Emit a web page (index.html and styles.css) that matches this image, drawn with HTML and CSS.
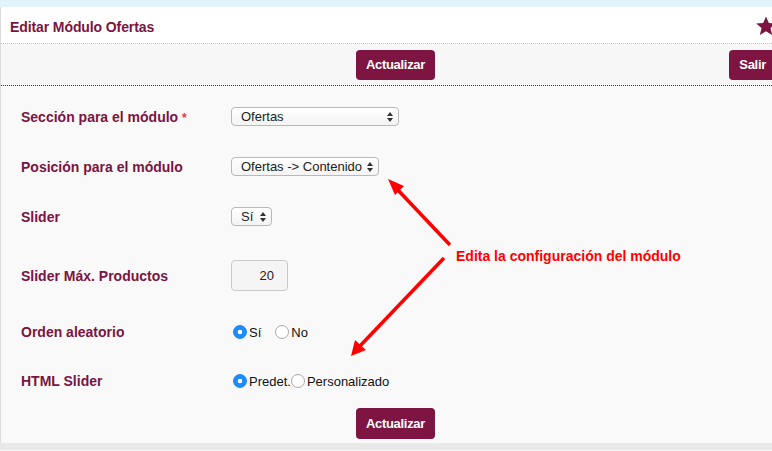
FILE: index.html
```html
<!DOCTYPE html>
<html lang="es">
<head>
  <meta charset="UTF-8" />
  <meta name="viewport" content="width=device-width, initial-scale=1.0" />
  <title>Editar Módulo Ofertas</title>
  <link rel="stylesheet" href="styles.css">
</head>
<body>
  <div class="topbar"></div>

  <div class="panel">
    <div class="panel-head">
      <h2>Editar Módulo Ofertas</h2>
      <svg class="star" width="22" height="22" viewBox="0 0 24 24" aria-hidden="true">
        <path d="M12 1.5l3.1 7.2 7.6.6-5.8 5 1.8 7.6L12 17.8l-6.7 4.1 1.8-7.6-5.8-5 7.6-.6z" />
      </svg>
    </div>

    <div class="toolbar">
      <span></span>
      <button type="button" class="btn">Actualizar</button>
      <button type="button" class="btn btn-exit">Salir</button>
    </div>

    <form class="form">
      <div class="row">
        <label class="label">Sección para el módulo <span class="req">*</span></label>
        <span class="select-wrap">
          <select class="select select-wide">
            <option>Ofertas</option>
          </select>
        </span>
      </div>

      <div class="row">
        <label class="label">Posición para el módulo</label>
        <span class="select-wrap">
          <select class="select">
            <option>Ofertas -&gt; Contenido</option>
          </select>
        </span>
      </div>

      <div class="row">
        <label class="label">Slider</label>
        <span class="select-wrap">
          <select class="select select-small">
            <option>Sí</option>
          </select>
        </span>
      </div>

      <div class="row row-tall">
        <label class="label">Slider Máx. Productos</label>
        <input class="number" type="text" value="20">
      </div>

      <div class="row">
        <label class="label">Orden aleatorio</label>
        <div class="radios">
          <label class="radio radio-spaced"><input type="radio" name="orden" checked>Sí</label>
          <label class="radio"><input type="radio" name="orden">No</label>
        </div>
      </div>

      <div class="row">
        <label class="label">HTML Slider</label>
        <div class="radios">
          <label class="radio"><input type="radio" name="html" checked>Predet.</label>
          <label class="radio"><input type="radio" name="html">Personalizado</label>
        </div>
      </div>

      <div class="form-actions">
        <button type="button" class="btn">Actualizar</button>
      </div>
    </form>
  </div>

  <div class="footer-bar"></div>

  <!-- annotation drawn on top of the screenshot -->
  <svg class="annot" width="772" height="451" viewBox="0 0 772 451" aria-hidden="true">
    <line x1="450" y1="245" x2="396" y2="188" />
    <polygon points="388,179 404,186 395,195" />
    <line x1="444" y1="258" x2="359" y2="347" />
    <polygon points="351,356 355,340 366,350" />
  </svg>
  <p class="annot-text">Edita la configuración del módulo</p>
</body>
</html>
```

FILE: styles.css
```css
/* ==========================================================================
   Reset & Global Styles
   ========================================================================== */
*, *::before, *::after {
  margin: 0;
  padding: 0;
  box-sizing: border-box;
}
html, body {
  overflow: hidden;
}
body {
  position: relative;
  width: 772px;
  height: 451px;
  font-family: "Liberation Sans", Arial, sans-serif;
  background: #f9f9f9;
  color: #222;
}

.topbar {
  height: 7px;
  width: 790px;
  background: #e1f4fb;
}

/* ==========================================================================
   Panel
   ========================================================================== */
.panel {
  width: 790px;
  border-left: 1px solid #dcdcdc;
}
.panel-head {
  display: flex;
  align-items: center;
  justify-content: space-between;
  height: 37px;
  padding: 0 13px 0 9px;
  background: #fff;
  border-bottom: 1px dotted #c4c4c4;
}
.panel-head h2 {
  padding-top: 3px;
  font-size: 14px;
  font-weight: bold;
  color: #7b1441;
  letter-spacing: -0.1px;
}
.star {
  fill: #7b1441;
  margin-top: 1px;
}

.toolbar {
  display: grid;
  grid-template-columns: 1fr auto 1fr;
  align-items: center;
  height: 42px;
  padding: 0 14px;
  background: #f7f7f7;
  border-bottom: 1px dotted #7b1441;
}
.btn-exit {
  justify-self: end;
}
.btn {
  height: 31px;
  padding: 0 10px;
  border: none;
  border-radius: 4px;
  background: #7d1441;
  color: #fff;
  font-family: "Liberation Sans", Arial, sans-serif;
  font-size: 13px;
  font-weight: bold;
  letter-spacing: -0.3px;
}
.toolbar .btn {
  height: 30px;
}

/* ==========================================================================
   Form
   ========================================================================== */
.form {
  display: flex;
  flex-direction: column;
  gap: 31px;
  padding: 21px 0 4px 20px;
  background: #f9f9f9;
}
.row {
  display: grid;
  grid-template-columns: 210px 1fr;
  align-items: center;
}
.row-tall {
  margin-top: 3px;
  margin-bottom: 1px;
}
.label {
  font-size: 14px;
  font-weight: bold;
  color: #7b1441;
}
.req {
  color: #e0334d;
  font-size: 12px;
}

.select-wrap {
  position: relative;
  justify-self: start;
}
.select-wrap::before,
.select-wrap::after {
  content: "";
  position: absolute;
  right: 6px;
  border-left: 3px solid transparent;
  border-right: 3px solid transparent;
  pointer-events: none;
}
.select-wrap::before {
  top: 5px;
  border-bottom: 4px solid #333;
}
.select-wrap::after {
  top: 11px;
  border-top: 4px solid #333;
}
.select {
  -webkit-appearance: none;
  appearance: none;
  display: block;
  height: 19px;
  padding: 0 15px 0 9px;
  border: 1px solid #b9b9b9;
  border-radius: 4px;
  background: linear-gradient(#ffffff, #f4f4f4);
  font-family: "Liberation Sans", Arial, sans-serif;
  font-size: 13px;
  color: #222;
}
.select-wide {
  width: 168px;
}
.select-small {
  width: 41px;
}

.number {
  justify-self: start;
  width: 57px;
  height: 31px;
  padding: 0 13px 0 0;
  border: 1px solid #c9c9c9;
  border-radius: 4px;
  background: #f5f5f5;
  text-align: right;
  font-family: "Liberation Sans", Arial, sans-serif;
  font-size: 13px;
  color: #222;
}

.radios {
  display: flex;
  align-items: center;
  height: 18px;
  padding-left: 2px;
}
.radio {
  display: flex;
  align-items: center;
  font-size: 13px;
  color: #111;
}
.radio-spaced {
  margin-right: 14px;
}
.radio input {
  -webkit-appearance: none;
  appearance: none;
  width: 14px;
  height: 14px;
  margin-right: 2px;
  border: 1px solid #a9a9a9;
  border-radius: 50%;
  background: #fff;
}
.radio input:checked {
  border-color: #1a86f0;
  background: radial-gradient(circle, #fff 0 2px, #1a8cfb 2.6px);
}

.form-actions {
  display: flex;
  justify-content: center;
  margin-top: -13px;
  padding-right: 20px;
}

.footer-bar {
  width: 790px;
  height: 7px;
  background: #e9e9e9;
}

/* ==========================================================================
   Annotation overlay
   ========================================================================== */
.annot {
  position: absolute;
  top: 0;
  left: 0;
  pointer-events: none;
}
.annot line {
  stroke: #ff0000;
  stroke-width: 3.5;
}
.annot polygon {
  fill: #ff0000;
}
.annot-text {
  position: absolute;
  left: 456px;
  top: 248px;
  font-size: 14px;
  font-weight: bold;
  color: #ff0000;
}
```
